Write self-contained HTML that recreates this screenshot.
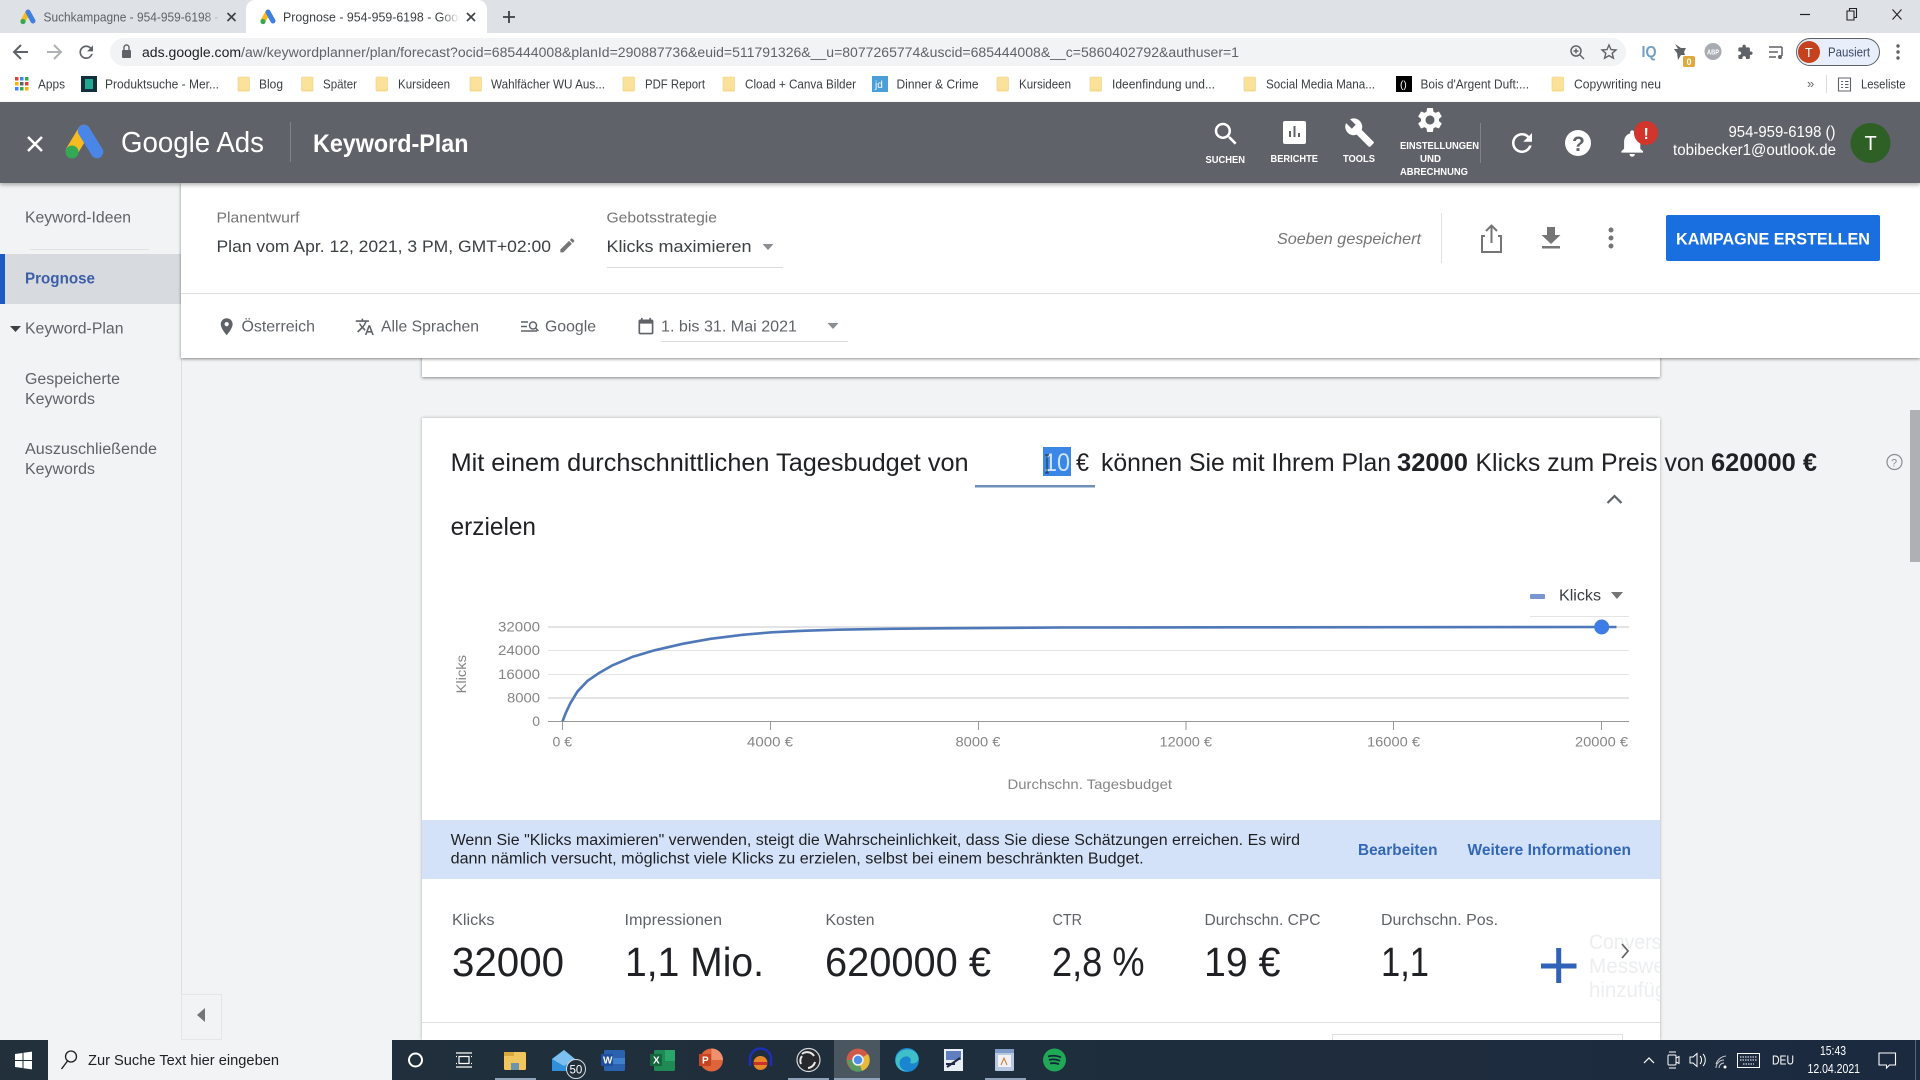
<!DOCTYPE html>
<html lang="de"><head><meta charset="utf-8"><title>Prognose - Keyword-Plan</title>
<style>
html,body{margin:0;padding:0;width:1920px;height:1080px;overflow:hidden;background:#f1f3f4;font-family:"Liberation Sans",sans-serif}
.b{position:absolute}
svg{position:absolute;left:0;top:0}
text{font-family:"Liberation Sans",sans-serif}
.tab{font-size:13px;fill:#5f6368}
.bm{font-size:12.5px;fill:#3c4043}
.nav{font-size:10.5px;font-weight:700;fill:#fff}
.side{font-size:15.5px;fill:#5f6368}
.lab{font-size:14.5px;fill:#757575}
.val{font-size:17px;fill:#3c4043}
.row{font-size:16px;fill:#5f6368}
.head{font-size:25px;fill:#202124}
.ax{font-size:14px;fill:#858585}
.info{font-size:15.5px;fill:#202124}
.lnk{font-size:15.5px;font-weight:700;fill:#3367b5}
.ml{font-size:15.5px;fill:#5f6368}
.mv{font-size:41px;fill:#202124}
.fd{font-size:21px;fill:#eceef0}
.tb{font-size:12.5px;fill:#fff}
</style></head><body>
<div class="b" style="left:0;top:0;width:1920px;height:33px;background:#dee1e6"></div>
<div class="b" style="left:246px;top:0;width:241px;height:33px;background:#fff;border-radius:9px 9px 0 0"></div>
<div class="b" style="left:0;top:33px;width:1920px;height:69px;background:#fff"></div>
<div class="b" style="left:110px;top:38px;width:1516px;height:28px;background:#f1f3f4;border-radius:14px"></div>
<div class="b" style="left:1796px;top:38px;width:82px;height:26px;background:#e8eefa;border:1px solid #5f6368;border-radius:14px"></div>
<div class="b" style="left:0;top:183px;width:181px;height:857px;background:#f1f3f4;border-right:1px solid #dcdee1"></div>
<div class="b" style="left:0;top:254px;width:181px;height:50px;background:#d7dade"></div>
<div class="b" style="left:0;top:254px;width:5px;height:50px;background:#1c59c4"></div>
<div class="b" style="left:30px;top:249px;width:119px;height:1px;background:#dfe1e4"></div>
<div class="b" style="left:422px;top:340px;width:1238px;height:37px;background:#fff;box-shadow:0 1px 3px rgba(0,0,0,.45)"></div>
<div class="b" style="left:181px;top:183px;width:1739px;height:175px;background:#fff;box-shadow:0 1px 3px rgba(0,0,0,.45)"></div>
<div class="b" style="left:181px;top:293px;width:1739px;height:1px;background:#e0e0e0"></div>
<div class="b" style="left:0;top:102px;width:1920px;height:81px;background:#5f6268;box-shadow:0 2px 4px rgba(0,0,0,.3)"></div>
<div class="b" style="left:422px;top:418px;width:1238px;height:622px;background:#fff;box-shadow:0 0 3px rgba(0,0,0,.3)"></div>
<div class="b" style="left:422px;top:820px;width:1238px;height:59px;background:#d3e2f9"></div>
<div class="b" style="left:422px;top:1022px;width:1238px;height:1px;background:#e0e0e0"></div>
<div class="b" style="left:1332px;top:1034px;width:289px;height:8px;border:1px solid #e0e0e0"></div>
<div class="b" style="left:181px;top:994px;width:41px;height:46px;background:#f1f3f4;border:1px solid #e4e6e8;box-sizing:border-box"></div>
<div class="b" style="left:1910px;top:410px;width:10px;height:152px;background:#aeb0b3"></div>
<div class="b" style="left:1043px;top:447px;width:28px;height:29px;background:#3b87e8"></div>
<div class="b" style="left:0;top:1040px;width:1920px;height:40px;background:linear-gradient(90deg,#22303c,#1f2e3c 50%,#1c2a40)"></div>
<div class="b" style="left:48px;top:1040px;width:344px;height:40px;background:#f1f3f4"></div>
<div class="b" style="left:834px;top:1040px;width:46px;height:40px;background:#4a5660"></div>
<div class="b" style="left:495px;top:1078px;width:41px;height:2px;background:#8fa3b8"></div>
<div class="b" style="left:788px;top:1078px;width:41px;height:2px;background:#8fa3b8"></div>
<div class="b" style="left:834px;top:1078px;width:46px;height:2px;background:#8fa3b8"></div>
<div class="b" style="left:985px;top:1078px;width:41px;height:2px;background:#8fa3b8"></div>

<svg width="1920" height="1080" viewBox="0 0 1920 1080">
<defs>
<g id="fo"><rect x="0" y="0" width="11.500" height="14" rx="1" fill="#fbe29a" stroke="#f0d080" stroke-width=".6"/><rect x="0" y="12.500" width="11.500" height="2" fill="#f5d98e"/></g>
<g id="ad"><line x1="8" y1="3" x2="3" y2="12" stroke="#f5bb1f" stroke-width="5" stroke-linecap="round"/><line x1="8" y1="3" x2="13" y2="12" stroke="#3f7fe0" stroke-width="5" stroke-linecap="round"/><circle cx="3" cy="12.500" r="2.600" fill="#35a853"/></g>
<clipPath id="cc"><rect x="421" y="918" width="1239" height="100"/></clipPath>
<linearGradient id="f1"><stop offset="0" stop-color="#dee1e6" stop-opacity="0"/><stop offset="1" stop-color="#dee1e6"/></linearGradient>
<linearGradient id="f2"><stop offset="0" stop-color="#fff" stop-opacity="0"/><stop offset="1" stop-color="#fff"/></linearGradient>
</defs>

<!-- Tabs -->
<use href="#ad" x="20" y="9"/><use href="#ad" x="260" y="9"/>
<text class="tab" x="43.500" y="21.500" textLength="175" lengthAdjust="spacingAndGlyphs">Suchkampagne - 954-959-6198 -</text>
<text class="tab" x="283" y="21.500" textLength="182" lengthAdjust="spacingAndGlyphs" style="fill:#3c4043">Prognose - 954-959-6198 - Goog</text>
<rect x="205" y="6" width="16" height="22" fill="url(#f1)"/>
<rect x="440" y="6" width="20" height="22" fill="url(#f2)"/><rect x="460" y="6" width="6" height="22" fill="#fff"/>
<path d="M227.500 13l8 8m0-8l-8 8M467 13l8 8m0-8l-8 8" stroke="#3c4043" stroke-width="1.600" fill="none"/>
<path d="M509 11v12M503 17h12" stroke="#3c4043" stroke-width="1.800" fill="none"/>
<path d="M1800 14.500h10" stroke="#202124" stroke-width="1.200"/>
<path d="M1847 11h7v9h-7zM1849.500 11V8.500h7v9h-2.500" stroke="#202124" stroke-width="1.100" fill="none"/>
<path d="M1892.500 9.500l9 10m0-10l-9 10" stroke="#202124" stroke-width="1.100" fill="none"/>

<!-- Toolbar -->
<path d="M28 52H15m6-7l-7 7 7 7" stroke="#5f6368" stroke-width="2" fill="none"/>
<path d="M47 52h13m-6-7l7 7-7 7" stroke="#aeb1b5" stroke-width="2" fill="none"/>
<g transform="translate(76,42) scale(.85)"><path d="M17.650 6.350A7.958 7.958 0 0 0 12 4c-4.420 0-7.990 3.580-7.990 8s3.570 8 7.990 8c3.730 0 6.840-2.550 7.730-6h-2.080A5.990 5.990 0 0 1 12 18c-3.310 0-6-2.690-6-6s2.690-6 6-6c1.660 0 3.140.69 4.220 1.780L13 11h7V4l-2.350 2.350z" fill="#5f6368"/></g>
<rect x="122" y="50" width="9" height="8" rx="1" fill="#5f6368"/><path d="M124 50v-2.500a2.500 2.500 0 0 1 5 0V50" stroke="#5f6368" stroke-width="1.400" fill="none"/>
<text x="142" y="57" font-size="13.500" fill="#5f6368" textLength="1097" lengthAdjust="spacingAndGlyphs"><tspan fill="#202124">ads.google.com</tspan>/aw/keywordplanner/plan/forecast?ocid=685444008&amp;planId=290887736&amp;euid=511791326&amp;__u=8077265774&amp;uscid=685444008&amp;__c=5860402792&amp;authuser=1</text>
<circle cx="1576" cy="51" r="5" stroke="#5f6368" stroke-width="1.500" fill="none"/><path d="M1580 55l4 4M1576 48.500v5M1573.500 51h5" stroke="#5f6368" stroke-width="1.400"/>
<path d="M1609 45l2 4.600 5 .4-3.800 3.300 1.200 4.900-4.400-2.600-4.400 2.600 1.200-4.900-3.800-3.300 5-.4z" stroke="#5f6368" stroke-width="1.400" fill="none"/>
<text x="1641.500" y="57" font-size="15.500" font-weight="700" style="fill:#6f9fc4" textLength="15" lengthAdjust="spacingAndGlyphs">IQ</text>
<path d="M1675 44l6 4 5 0-2 4 1 3-4 0-3 5-1-7-3-4 4 0z" fill="#5f6368"/><rect x="1683" y="56" width="12" height="11" rx="2" fill="#e0a93a"/><text x="1686.500" y="65" font-size="9" font-weight="700" fill="#fff">0</text>
<circle cx="1713" cy="51.500" r="8.500" fill="#a8acb0"/><text x="1707" y="54.500" font-size="7" font-weight="700" fill="#fff" textLength="12" lengthAdjust="spacingAndGlyphs">ABP</text>
<g transform="translate(1737,44) scale(.68)"><path d="M20.500 11H19V7c0-1.100-.9-2-2-2h-4V3.500C13 2.120 11.880 1 10.500 1S8 2.120 8 3.500V5H4c-1.100 0-1.990.9-1.990 2v3.800H3.500c1.490 0 2.700 1.210 2.700 2.700s-1.210 2.700-2.700 2.700H2V20c0 1.100.9 2 2 2h3.800v-1.500c0-1.490 1.210-2.700 2.700-2.700 1.490 0 2.700 1.210 2.700 2.700V22H17c1.100 0 2-.9 2-2v-4h1.500c1.380 0 2.500-1.120 2.500-2.500S21.880 11 20.500 11z" fill="#5f6368"/></g>
<path d="M1769 47h13M1769 52h9M1769 57h7M1782 47v9" stroke="#5f6368" stroke-width="1.500" fill="none"/><circle cx="1780" cy="57" r="2" fill="#5f6368"/>
<circle cx="1809" cy="52" r="11" fill="#c5421f"/><text x="1805" y="57" font-size="12.500" fill="#fff">T</text>
<text x="1828" y="56.500" font-size="12.500" style="fill:#3c4a68" textLength="42" lengthAdjust="spacingAndGlyphs">Pausiert</text>
<circle cx="1898" cy="46" r="1.700" fill="#5f6368"/><circle cx="1898" cy="52" r="1.700" fill="#5f6368"/><circle cx="1898" cy="58" r="1.700" fill="#5f6368"/>

<!-- Bookmarks -->
<g><rect x="15" y="77" width="3.500" height="3.500" fill="#db4437"/><rect x="20" y="77" width="3.500" height="3.500" fill="#4285f4"/><rect x="25" y="77" width="3.500" height="3.500" fill="#34a853"/><rect x="15" y="82" width="3.500" height="3.500" fill="#f4b400"/><rect x="20" y="82" width="3.500" height="3.500" fill="#5f6368"/><rect x="25" y="82" width="3.500" height="3.500" fill="#db4437"/><rect x="15" y="87" width="3.500" height="3.500" fill="#4285f4"/><rect x="20" y="87" width="3.500" height="3.500" fill="#34a853"/><rect x="25" y="87" width="3.500" height="3.500" fill="#f4b400"/></g>
<text class="bm" x="38" y="88.500" textLength="27" lengthAdjust="spacingAndGlyphs">Apps</text>
<rect x="81" y="76" width="16" height="16" fill="#12303c"/><rect x="85" y="79" width="8" height="10" fill="#20a890"/>
<text class="bm" x="105" y="88.500" textLength="114" lengthAdjust="spacingAndGlyphs">Produktsuche - Mer...</text>
<use href="#fo" x="238" y="77"/><text class="bm" x="259" y="88.500" textLength="24" lengthAdjust="spacingAndGlyphs">Blog</text>
<use href="#fo" x="301.500" y="77"/><text class="bm" x="323" y="88.500" textLength="34" lengthAdjust="spacingAndGlyphs">Später</text>
<use href="#fo" x="376" y="77"/><text class="bm" x="398" y="88.500" textLength="52" lengthAdjust="spacingAndGlyphs">Kursideen</text>
<use href="#fo" x="470" y="77"/><text class="bm" x="491" y="88.500" textLength="114" lengthAdjust="spacingAndGlyphs">Wahlfächer WU Aus...</text>
<use href="#fo" x="623" y="77"/><text class="bm" x="645" y="88.500" textLength="60" lengthAdjust="spacingAndGlyphs">PDF Report</text>
<use href="#fo" x="723" y="77"/><text class="bm" x="745" y="88.500" textLength="111" lengthAdjust="spacingAndGlyphs">Cload + Canva Bilder</text>
<rect x="872" y="76" width="16" height="16" fill="#4a9fd8"/><text x="875" y="88" font-size="10" fill="#fff">jd</text>
<text class="bm" x="896.500" y="88.500" textLength="82" lengthAdjust="spacingAndGlyphs">Dinner &amp; Crime</text>
<use href="#fo" x="997" y="77"/><text class="bm" x="1019" y="88.500" textLength="52" lengthAdjust="spacingAndGlyphs">Kursideen</text>
<use href="#fo" x="1090" y="77"/><text class="bm" x="1112" y="88.500" textLength="103" lengthAdjust="spacingAndGlyphs">Ideenfindung und...</text>
<use href="#fo" x="1244" y="77"/><text class="bm" x="1266" y="88.500" textLength="109" lengthAdjust="spacingAndGlyphs">Social Media Mana...</text>
<rect x="1396" y="76" width="16" height="16" fill="#000"/><text x="1400" y="88" font-size="10" fill="#fff">()</text>
<text class="bm" x="1420.500" y="88.500" textLength="108.500" lengthAdjust="spacingAndGlyphs">Bois d'Argent Duft:...</text>
<use href="#fo" x="1552" y="77"/><text class="bm" x="1574" y="88.500" textLength="87" lengthAdjust="spacingAndGlyphs">Copywriting neu</text>
<text x="1807" y="88" font-size="13" style="fill:#5f6368">»</text>
<rect x="1826" y="75" width="1" height="18" fill="#dadce0"/>
<path d="M1838.500 78h12v13h-12zM1841 81.500h2M1845 81.500h3.500M1841 84.500h2M1845 84.500h3.500M1841 87.500h2M1845 87.500h3.500" stroke="#5f6368" stroke-width="1.100" fill="none"/>
<text class="bm" x="1861" y="88.500" textLength="44.500" lengthAdjust="spacingAndGlyphs">Leseliste</text>

<!-- Ads header -->
<path d="M28 137l14 14m0-14l-14 14" stroke="#fff" stroke-width="2.500" fill="none"/>
<line x1="84" y1="131" x2="72" y2="151" stroke="#f5bb1f" stroke-width="12.500" stroke-linecap="round"/>
<line x1="84" y1="131" x2="97" y2="152" stroke="#4a86e8" stroke-width="12.500" stroke-linecap="round"/>
<circle cx="72" cy="152" r="6.500" fill="#34a853"/>
<text x="121" y="152" font-size="29" fill="#fff" textLength="143" lengthAdjust="spacingAndGlyphs">Google Ads</text>
<rect x="290" y="122" width="1" height="40" fill="#80848a"/>
<text x="313" y="152" font-size="25" font-weight="700" fill="#fff" textLength="155.500" lengthAdjust="spacingAndGlyphs">Keyword-Plan</text>
<g transform="translate(1211,119) scale(1.250)"><path d="M15.500 14h-.79l-.28-.27A6.471 6.471 0 0 0 16 9.500 6.500 6.500 0 1 0 9.500 16c1.610 0 3.090-.59 4.230-1.570l.27.28v.79l5 4.990L20.490 19l-4.990-5zm-6 0C7.010 14 5 11.990 5 9.500S7.010 5 9.500 5 14 7.010 14 9.500 11.990 14 9.500 14z" fill="#fff"/></g>
<text class="nav" x="1205.500" y="163" textLength="39.500" lengthAdjust="spacingAndGlyphs">SUCHEN</text>
<rect x="1283" y="121" width="23" height="23" rx="2" fill="#fff"/><path d="M1290 137v-6M1294.500 137v-11M1299 137v-4" stroke="#5f6368" stroke-width="2"/>
<text class="nav" x="1270.500" y="162" textLength="47.500" lengthAdjust="spacingAndGlyphs">BERICHTE</text>
<g transform="translate(1344,117) scale(1.300)"><path d="M22.700 19l-9.100-9.100c.9-2.300.4-5-1.500-6.900-2-2-5-2.400-7.400-1.300L9 6 6 9 1.600 4.700C.4 7.100.9 10.100 2.900 12.100c1.900 1.900 4.600 2.400 6.900 1.500l9.100 9.100c.4.4 1 .4 1.400 0l2.300-2.300c.5-.4.5-1.100.1-1.400z" fill="#fff"/></g>
<text class="nav" x="1343" y="162" textLength="32" lengthAdjust="spacingAndGlyphs">TOOLS</text>
<g transform="translate(1415,105) scale(1.250)"><path d="M19.140 12.940c.04-.3.06-.61.06-.94 0-.32-.02-.64-.07-.94l2.030-1.580a.49.49 0 0 0 .12-.61l-1.920-3.320a.488.488 0 0 0-.59-.22l-2.390.96c-.5-.38-1.030-.7-1.620-.94l-.36-2.540a.484.484 0 0 0-.48-.41h-3.840c-.24 0-.43.17-.47.41l-.36 2.540c-.59.24-1.130.57-1.620.94l-2.390-.96c-.22-.08-.47 0-.59.22L2.740 8.870c-.12.21-.08.47.12.61l2.030 1.580c-.05.3-.09.63-.09.94s.02.64.07.94l-2.030 1.580a.49.49 0 0 0-.12.61l1.920 3.320c.12.22.37.29.59.22l2.390-.96c.5.38 1.030.7 1.620.94l.36 2.540c.05.24.24.41.48.41h3.840c.24 0 .44-.17.47-.41l.36-2.540c.59-.24 1.130-.56 1.620-.94l2.390.96c.22.08.47 0 .59-.22l1.920-3.320c.12-.22.07-.47-.12-.61l-2.010-1.580zM12 15.600c-1.980 0-3.600-1.620-3.600-3.600s1.620-3.600 3.600-3.600 3.600 1.620 3.600 3.600-1.620 3.600-3.600 3.600z" fill="#fff"/></g>
<text class="nav" x="1400" y="149" textLength="79" lengthAdjust="spacingAndGlyphs">EINSTELLUNGEN</text>
<text class="nav" x="1420" y="162" textLength="21" lengthAdjust="spacingAndGlyphs">UND</text>
<text class="nav" x="1400" y="175" textLength="68" lengthAdjust="spacingAndGlyphs">ABRECHNUNG</text>
<rect x="1480" y="123" width="1" height="40" fill="#80848a"/>
<g transform="translate(1507,128) scale(1.250)"><path d="M17.650 6.350A7.958 7.958 0 0 0 12 4c-4.420 0-7.990 3.580-7.990 8s3.570 8 7.990 8c3.730 0 6.840-2.550 7.730-6h-2.080A5.990 5.990 0 0 1 12 18c-3.310 0-6-2.690-6-6s2.690-6 6-6c1.660 0 3.140.69 4.220 1.780L13 11h7V4l-2.350 2.350z" fill="#fff"/></g>
<circle cx="1578" cy="143" r="13" fill="#fff"/><text x="1572" y="151" font-size="21" font-weight="700" style="fill:#5f6368">?</text>
<g transform="translate(1616,127) scale(1.350)"><path d="M12 22c1.100 0 2-.9 2-2h-4c0 1.100.89 2 2 2zm6-6v-5c0-3.070-1.640-5.640-4.500-6.320V4c0-.83-.67-1.500-1.500-1.500s-1.500.67-1.500 1.500v.68C7.630 5.360 6 7.920 6 11v5l-2 2v1h16v-1l-2-2z" fill="#fff"/></g>
<circle cx="1646" cy="133" r="12" fill="#d1352b"/><text x="1643.500" y="139" font-size="16" font-weight="700" fill="#fff">!</text>
<text x="1728.500" y="137" font-size="15.500" fill="#fff" textLength="107" lengthAdjust="spacingAndGlyphs">954-959-6198 ()</text>
<text x="1673" y="155" font-size="15.500" fill="#fff" textLength="163" lengthAdjust="spacingAndGlyphs">tobibecker1@outlook.de</text>
<circle cx="1870.500" cy="143" r="20" fill="#2e5f24"/><text x="1864.500" y="150" font-size="20" fill="#fff">T</text>

<!-- Sidebar -->
<text class="side" x="25" y="222.500" textLength="106" lengthAdjust="spacingAndGlyphs">Keyword-Ideen</text>
<text class="side" x="25" y="283.500" font-weight="700" style="fill:#3d5fa8" textLength="70" lengthAdjust="spacingAndGlyphs">Prognose</text>
<path d="M10 326h11l-5.500 6z" fill="#3c4043"/>
<text class="side" x="25" y="333.500" textLength="98.500" lengthAdjust="spacingAndGlyphs">Keyword-Plan</text>
<text class="side" x="25" y="384" textLength="95" lengthAdjust="spacingAndGlyphs">Gespeicherte</text>
<text class="side" x="25" y="404" textLength="70" lengthAdjust="spacingAndGlyphs">Keywords</text>
<text class="side" x="25" y="454" textLength="132" lengthAdjust="spacingAndGlyphs">Auszuschließende</text>
<text class="side" x="25" y="474" textLength="70" lengthAdjust="spacingAndGlyphs">Keywords</text>
<path d="M205 1008v14l-8-7z" fill="#757575"/>

<!-- Sub header -->
<text class="lab" x="216.500" y="222.500" textLength="83" lengthAdjust="spacingAndGlyphs">Planentwurf</text>
<text class="val" x="216.500" y="252" textLength="334.500" lengthAdjust="spacingAndGlyphs">Plan vom Apr. 12, 2021, 3 PM, GMT+02:00</text>
<g transform="translate(558,236) rotate(0) scale(.78)"><path d="M3 17.250V21h3.750L17.810 9.940l-3.750-3.750L3 17.250zM20.710 7.040a.996.996 0 0 0 0-1.410l-2.340-2.340a.996.996 0 0 0-1.410 0l-1.830 1.830 3.750 3.750 1.830-1.830z" fill="#757575"/></g>
<text class="lab" x="606.500" y="222.500" textLength="110.500" lengthAdjust="spacingAndGlyphs">Gebotsstrategie</text>
<text class="val" x="606.500" y="252" textLength="145" lengthAdjust="spacingAndGlyphs">Klicks maximieren</text>
<path d="M762.500 244h11l-5.500 6z" fill="#8a8d91"/>
<rect x="607" y="267" width="176" height="1" fill="#dadce0"/>
<g transform="translate(216.500,316.500) scale(.85)"><path d="M12 2C8.130 2 5 5.130 5 9c0 5.250 7 13 7 13s7-7.750 7-13c0-3.870-3.130-7-7-7zm0 9.500a2.500 2.500 0 0 1 0-5 2.500 2.500 0 0 1 0 5z" fill="#5f6368"/></g>
<text class="row" x="241.500" y="331.500" textLength="73.500" lengthAdjust="spacingAndGlyphs">Österreich</text>
<g transform="translate(355,317) scale(.82)"><path d="M12.870 15.070l-2.540-2.510.03-.03c1.740-1.940 2.980-4.170 3.710-6.530H17V4h-7V2H8v2H1v1.990h11.170C11.500 7.920 10.440 9.750 9 11.350 8.070 10.320 7.300 9.190 6.690 8h-2c.73 1.630 1.730 3.170 2.980 4.560l-5.090 5.020L4 19l5-5 3.110 3.110.76-2.040zM18.500 10h-2L12 22h2l1.120-3h4.750L21 22h2l-4.500-12zm-2.620 7l1.620-4.330L19.120 17h-3.240z" fill="#5f6368"/></g>
<text class="row" x="381" y="331.500" textLength="98" lengthAdjust="spacingAndGlyphs">Alle Sprachen</text>
<path d="M521 322h7M521 326.500h6M521 331h16" stroke="#5f6368" stroke-width="1.500"/><circle cx="533" cy="325.500" r="3.500" stroke="#5f6368" stroke-width="1.500" fill="none"/><path d="M535.500 328l3 3" stroke="#5f6368" stroke-width="1.500"/>
<text class="row" x="545" y="331.500" textLength="51" lengthAdjust="spacingAndGlyphs">Google</text>
<g transform="translate(636,317) scale(.83)"><path d="M19 3h-1V1h-2v2H8V1H6v2H5c-1.110 0-2 .9-2 2v14c0 1.100.89 2 2 2h14c1.100 0 2-.9 2-2V5c0-1.100-.9-2-2-2zm0 16H5V8h14v11z" fill="#5f6368"/></g>
<text class="row" x="661" y="331.500" textLength="136" lengthAdjust="spacingAndGlyphs">1. bis 31. Mai 2021</text>
<path d="M827.500 323h11l-5.500 6z" fill="#8a8d91"/>
<rect x="661" y="341" width="187" height="1" fill="#dadce0"/>
<text x="1277" y="244" font-size="16" font-style="italic" style="fill:#757575" textLength="144" lengthAdjust="spacingAndGlyphs">Soeben gespeichert</text>
<rect x="1441" y="213" width="1" height="50" fill="#e0e0e0"/>
<path d="M1485 236h-3v16h19v-16h-3" stroke="#757575" stroke-width="2" fill="none"/><path d="M1491.500 243v-17M1486 231l5.500-5.500 5.500 5.500" stroke="#757575" stroke-width="2" fill="none"/>
<path d="M1547 227h8v8h5.500l-9.500 9-9.500-9h5.500zM1542 246h18v2.500h-18z" fill="#757575"/>
<circle cx="1611" cy="230" r="2.500" fill="#757575"/><circle cx="1611" cy="238" r="2.500" fill="#757575"/><circle cx="1611" cy="246" r="2.500" fill="#757575"/>
<rect x="1666" y="215" width="214" height="46" rx="2" fill="#1a6fe0"/>
<text x="1676" y="244.500" font-size="17" font-weight="700" fill="#fff" textLength="194" lengthAdjust="spacingAndGlyphs">KAMPAGNE ERSTELLEN</text>

<!-- Sentence -->
<text class="head" x="450.600" y="471" textLength="518" lengthAdjust="spacingAndGlyphs">Mit einem durchschnittlichen Tagesbudget von</text>
<text class="head" x="1044" y="471" style="fill:#cfe4ff" textLength="26" lengthAdjust="spacingAndGlyphs">10</text>
<path d="M1045 455h4M1045 473h4M1047 455v18" stroke="#1e2c3f" stroke-width="1" fill="none"/>
<text class="head" x="1076" y="471" textLength="13" lengthAdjust="spacingAndGlyphs">€</text>
<rect x="975" y="485" width="120" height="2.500" fill="#6f8fb8"/>
<text class="head" x="1101" y="471" textLength="290" lengthAdjust="spacingAndGlyphs">können Sie mit Ihrem Plan</text>
<text class="head" x="1397" y="471" font-weight="700" textLength="71" lengthAdjust="spacingAndGlyphs">32000</text>
<text class="head" x="1475.500" y="471" textLength="229" lengthAdjust="spacingAndGlyphs">Klicks zum Preis von</text>
<text class="head" x="1711" y="471" font-weight="700" textLength="106" lengthAdjust="spacingAndGlyphs">620000 €</text>
<circle cx="1894.500" cy="462" r="7.500" stroke="#8a8d91" stroke-width="1.200" fill="none"/><text x="1891" y="466.500" font-size="11" style="fill:#8a8d91">?</text>
<path d="M1607.500 503l7-7 7 7" stroke="#5f6368" stroke-width="2.200" fill="none"/>
<text class="head" x="450.600" y="535" textLength="85.400" lengthAdjust="spacingAndGlyphs">erzielen</text>

<!-- Chart -->
<g fill="#e4e4e4"><rect x="548" y="626" width="1081" height="2"/><rect x="548" y="650" width="1081" height="1"/><rect x="548" y="674" width="1081" height="1"/><rect x="548" y="697" width="1081" height="2"/></g>
<rect x="548" y="721" width="1081" height="1" fill="#9a9a9a"/>
<path d="M562.500 722v8M770.500 722v8M978.500 722v8M1186 722v8M1393.500 722v8M1601.500 722v8" stroke="#9a9a9a"/>
<g text-anchor="end"><text class="ax" x="540" y="631.500" textLength="42" lengthAdjust="spacingAndGlyphs">32000</text><text class="ax" x="540" y="655" textLength="42" lengthAdjust="spacingAndGlyphs">24000</text><text class="ax" x="540" y="679" textLength="42" lengthAdjust="spacingAndGlyphs">16000</text><text class="ax" x="540" y="702.500" textLength="33" lengthAdjust="spacingAndGlyphs">8000</text><text class="ax" x="540" y="726">0</text></g>
<text class="ax" x="552.500" y="746.500" textLength="19.500" lengthAdjust="spacingAndGlyphs">0 €</text>
<text class="ax" x="747" y="746.500" textLength="46" lengthAdjust="spacingAndGlyphs">4000 €</text>
<text class="ax" x="955.500" y="746.500" textLength="45" lengthAdjust="spacingAndGlyphs">8000 €</text>
<text class="ax" x="1159.500" y="746.500" textLength="52.500" lengthAdjust="spacingAndGlyphs">12000 €</text>
<text class="ax" x="1367" y="746.500" textLength="53" lengthAdjust="spacingAndGlyphs">16000 €</text>
<text class="ax" x="1575" y="746.500" textLength="53" lengthAdjust="spacingAndGlyphs">20000 €</text>
<text class="ax" x="1007.500" y="789" textLength="164.500" lengthAdjust="spacingAndGlyphs">Durchschn. Tagesbudget</text>
<text class="ax" transform="translate(466,693.500) rotate(-90)" textLength="38.500" lengthAdjust="spacingAndGlyphs">Klicks</text>
<polyline points="562.600,721.300 565.600,713.300 570.300,703.300 577.600,691.300 587.600,680.800 598.600,673.300 612.600,665.300 632.600,656.800 654.600,650.300 682.600,643.800 710.600,638.800 742.600,634.800 771.600,632.300 802.600,630.800 837.600,629.700 882.600,628.900 939.600,628.300 1062.600,627.500 1229.600,627.300 1616.500,627" stroke="#4f78b8" stroke-width="2.600" fill="none" stroke-linejoin="round"/>
<circle cx="1601.700" cy="627" r="7.500" fill="#3f7de6"/>
<rect x="1530" y="594" width="15" height="5" rx="1" fill="#7896cf"/>
<text x="1559" y="600.500" font-size="16" style="fill:#3c4043" textLength="42" lengthAdjust="spacingAndGlyphs">Klicks</text>
<path d="M1611 592h12l-6 7z" fill="#757575"/>
<rect x="1530" y="616" width="99" height="1" fill="#e4e4e4"/>

<!-- Info band -->
<text class="info" x="450.600" y="845" textLength="849.400" lengthAdjust="spacingAndGlyphs">Wenn Sie "Klicks maximieren" verwenden, steigt die Wahrscheinlichkeit, dass Sie diese Schätzungen erreichen. Es wird</text>
<text class="info" x="450.600" y="863.500" textLength="693" lengthAdjust="spacingAndGlyphs">dann nämlich versucht, möglichst viele Klicks zu erzielen, selbst bei einem beschränkten Budget.</text>
<text class="lnk" x="1358" y="855" textLength="79.500" lengthAdjust="spacingAndGlyphs">Bearbeiten</text>
<text class="lnk" x="1467.500" y="855" textLength="163.500" lengthAdjust="spacingAndGlyphs">Weitere Informationen</text>

<!-- Metrics -->
<text class="ml" x="452" y="925" textLength="42.500" lengthAdjust="spacingAndGlyphs">Klicks</text>
<text class="ml" x="624.500" y="925" textLength="97.500" lengthAdjust="spacingAndGlyphs">Impressionen</text>
<text class="ml" x="825.500" y="925" textLength="49" lengthAdjust="spacingAndGlyphs">Kosten</text>
<text class="ml" x="1052.500" y="925" textLength="29.500" lengthAdjust="spacingAndGlyphs">CTR</text>
<text class="ml" x="1204.500" y="925" textLength="116" lengthAdjust="spacingAndGlyphs">Durchschn. CPC</text>
<text class="ml" x="1381" y="925" textLength="117" lengthAdjust="spacingAndGlyphs">Durchschn. Pos.</text>
<text class="mv" x="452" y="976" textLength="112" lengthAdjust="spacingAndGlyphs">32000</text>
<text class="mv" x="625" y="976" textLength="139" lengthAdjust="spacingAndGlyphs">1,1 Mio.</text>
<text class="mv" x="825" y="976" textLength="166" lengthAdjust="spacingAndGlyphs">620000 €</text>
<text class="mv" x="1052" y="976" textLength="92.500" lengthAdjust="spacingAndGlyphs">2,8 %</text>
<text class="mv" x="1204" y="976" textLength="76.500" lengthAdjust="spacingAndGlyphs">19 €</text>
<text class="mv" x="1381" y="976" textLength="48" lengthAdjust="spacingAndGlyphs">1,1</text>
<path d="M1541 966h35.500M1558.700 948v35" stroke="#2f62b8" stroke-width="5"/>
<g clip-path="url(#cc)"><text class="fd" x="1589" y="949" textLength="108" lengthAdjust="spacingAndGlyphs">Conversions</text><text class="fd" x="1589" y="973" textLength="100" lengthAdjust="spacingAndGlyphs">Messwerte</text><text class="fd" x="1589" y="997" textLength="100" lengthAdjust="spacingAndGlyphs">hinzufügen</text></g>
<path d="M1622 944l6 7-6 7" stroke="#616161" stroke-width="1.700" fill="none"/>

<!-- Taskbar -->
<g fill="#fff"><path d="M15 1054l7.500-1v7h-7.500zM23.500 1052.800l8.500-1.200v8.400h-8.500zM15 1061h7.500v7l-7.500-1zM23.500 1061h8.500v8.400l-8.500-1.200z"/></g>
<circle cx="71" cy="1056.500" r="5.500" stroke="#202124" stroke-width="1.300" fill="none"/><path d="M67.500 1061l-6 8" stroke="#202124" stroke-width="1.400"/>
<text x="88" y="1065" font-size="15" fill="#202124" textLength="191" lengthAdjust="spacingAndGlyphs">Zur Suche Text hier eingeben</text>
<circle cx="415.500" cy="1060" r="6.500" stroke="#fff" stroke-width="2" fill="none"/>
<path d="M456 1053h16M459 1056.500h10v7h-10zM456 1067h16M456 1056.500h1M471 1056.500h1M456 1063.500h1M471 1063.500h1" stroke="#fff" stroke-width="1.200" fill="none"/>
<rect x="504" y="1052" width="22" height="18" rx="1.500" fill="#efc75e"/><rect x="504" y="1052" width="10" height="4" fill="#d8a93e"/><rect x="511" y="1063" width="8" height="7" fill="#6f93a8"/>
<path d="M552 1059l12-9 11 9v12h-23z" fill="#2f8fd8"/><path d="M552 1059l12 7 11-7-11-9z" fill="#7cc0f0"/>
<circle cx="576" cy="1069" r="9.500" fill="#22303c" stroke="#d5dbe2" stroke-width="1"/><text x="569.500" y="1073.500" font-size="11.500" fill="#fff">50</text>
<rect x="604" y="1050" width="21" height="21" rx="1.500" fill="#2b62b0"/><rect x="612" y="1058" width="13" height="6" fill="#3f7fd0"/><rect x="601" y="1054" width="12" height="12" fill="#1f4f9c"/><text x="603" y="1063.500" font-size="10" font-weight="700" fill="#fff">W</text>
<rect x="654" y="1050" width="21" height="21" rx="1.500" fill="#1f8a55"/><rect x="665" y="1050" width="10" height="11" fill="#2ba56a"/><rect x="650" y="1054" width="12" height="12" fill="#14663d"/><text x="653" y="1063.500" font-size="10" font-weight="700" fill="#fff">X</text>
<circle cx="711.500" cy="1060" r="11.500" fill="#e0643a"/><path d="M711.500 1060v-11.500a11.500 11.500 0 0 1 11.500 11.500z" fill="#f0916e"/><rect x="699" y="1054" width="12" height="12" fill="#c8431f"/><text x="702" y="1063.500" font-size="10" font-weight="700" fill="#fff">P</text>
<path d="M750 1066v-7a10.500 10.500 0 0 1 21 0v7" stroke="#1c2fb8" stroke-width="2.500" fill="none"/><circle cx="760.500" cy="1063" r="7" fill="#e8862a"/><rect x="753.500" y="1062" width="14" height="3" fill="#c8322a"/>
<circle cx="808.500" cy="1060" r="11.500" fill="#26282c" stroke="#d5dbe2" stroke-width="1.200"/><path d="M802 1054a8 8 0 0 1 12 2M815 1062a8 8 0 0 1-7 6M801 1064a8 8 0 0 1 1-8" stroke="#e8eaec" stroke-width="2" fill="none"/>
<circle cx="858" cy="1060" r="11.500" fill="#cf5a4a"/><path d="M858 1060l10-6a11.500 11.500 0 0 1-6 17z" fill="#e8b93a"/><path d="M858 1060l4 11a11.500 11.500 0 0 1-11.500-2l-4-9z" fill="#5a9a62"/><circle cx="858" cy="1060" r="5" fill="#4f8fe8" stroke="#f0f2f4" stroke-width="1.500"/>
<circle cx="907" cy="1060" r="12" fill="#1b86d0"/><path d="M896 1058c2-10 18-12 22-2 2 5-3 9-8 7 3-5-3-9-8-5-5 4-2 13 6 13-8 2-14-6-12-13z" fill="#3fc0c8"/>
<rect x="944" y="1049" width="19" height="22" fill="#e8eef6"/><rect x="946" y="1051" width="15" height="9" fill="#5f7fc0"/><path d="M947 1067l13-9M946 1064h9" stroke="#20284a" stroke-width="2"/>
<rect x="995" y="1049" width="19" height="22" rx="1" fill="#b8c8e0"/><rect x="995" y="1049" width="19" height="4" fill="#7f9cc8"/><rect x="998" y="1055" width="13" height="12" fill="#f0f2f6"/><path d="M1001 1065l3-7 3 7" stroke="#d0762a" fill="none"/>
<circle cx="1054.500" cy="1060" r="11.500" fill="#1fa855"/><path d="M1048 1056.500c4-1 9-1 13 1M1049 1060c3.500-1 7.500-.8 11 .8M1050 1063.500c3-.8 6-.5 9 .7" stroke="#12283a" stroke-width="1.800" fill="none"/>
<path d="M1644 1063l5-5 5 5" stroke="#fff" stroke-width="1.200" fill="none"/>
<rect x="1668" y="1055" width="8" height="10" rx="1" stroke="#fff" fill="none"/><path d="M1676 1058l3-1.500v7l-3-1.500M1669 1052h7M1669 1068h7" stroke="#fff" fill="none"/>
<path d="M1690 1057h3l4-3.500v13l-4-3.500h-3zM1700 1056c2 2 2 6 0 8M1703 1054c3 3 3 9 0 12" stroke="#fff" fill="none"/>
<path d="M1716 1068a8 8 0 0 1 8-8M1719 1068a5 5 0 0 1 5-5M1716 1064a12 12 0 0 1 10-8" stroke="#c8ccd0" fill="none"/><circle cx="1725" cy="1067" r="1.500" fill="#fff"/>
<rect x="1737.500" y="1053.500" width="22" height="14" stroke="#fff" fill="none"/><path d="M1740 1057h17M1740 1060h17M1743 1064h11" stroke="#fff" stroke-dasharray="1.500 1"/>
<text class="tb" x="1772" y="1064.500" textLength="22" lengthAdjust="spacingAndGlyphs">DEU</text>
<text class="tb" x="1820" y="1055" textLength="26" lengthAdjust="spacingAndGlyphs">15:43</text>
<text class="tb" x="1807.500" y="1073" textLength="52.500" lengthAdjust="spacingAndGlyphs">12.04.2021</text>
<path d="M1879 1053h16.500v12h-6l-3 3v-3h-7.500z" stroke="#fff" stroke-width="1.100" fill="none"/>
<rect x="1915" y="1040" width="1" height="40" fill="#5a6676"/>
</svg>
</body></html>
